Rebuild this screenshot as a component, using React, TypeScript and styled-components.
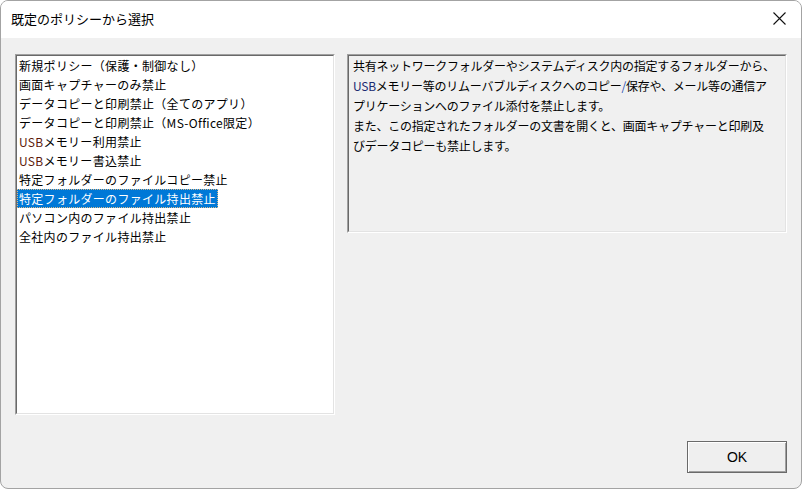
import React from "react";
import styled, { createGlobalStyle } from "styled-components";

const GlobalStyle = createGlobalStyle`
  html, body { margin: 0; padding: 0; background: #ffffff; }
  * { box-sizing: border-box; }
`;

const FONT = `"Noto Sans CJK JP", "Noto Sans", sans-serif`;

const Window = styled.div`
  width: 802px;
  height: 489px;
  border: 1px solid #a3a3a3;
  border-radius: 8px;
  overflow: hidden;
  background: #f0f0f0;
  display: flex;
  flex-direction: column;
  font-family: ${FONT};
  color: #000;
`;

const TitleBar = styled.div`
  height: 37px;
  background: #ffffff;
  display: flex;
  align-items: center;
  justify-content: space-between;
  padding: 0 15px 2px 10px;
`;

const Title = styled.div`
  font-size: 13px;
  line-height: 16px;
`;

const CloseIcon = styled.svg`
  width: 13px;
  height: 13px;
  display: block;
`;

const Body = styled.div`
  flex: 1;
  display: flex;
  flex-direction: column;
  padding: 16px 14px 15px 14px;
`;

const Panels = styled.div`
  display: flex;
  gap: 12px;
  align-items: flex-start;
`;

const Sunken = styled.div<{ $w: number; $h: number; $bg: string }>`
  width: ${(p) => p.$w}px;
  height: ${(p) => p.$h}px;
  border: 1px solid;
  border-color: #a0a0a0 #ffffff #ffffff #a0a0a0;
  background: ${(p) => p.$bg};
`;

const SunkenInner = styled.div`
  width: 100%;
  height: 100%;
  border: 1px solid;
  border-color: #696969 #e3e3e3 #e3e3e3 #696969;
  overflow: hidden;
`;

const List = styled.div`
  display: flex;
  flex-direction: column;
  align-items: flex-start;
`;

const Item = styled.div<{ $selected?: boolean }>`
  height: 19px;
  line-height: 19px;
  font-size: 12px;
  letter-spacing: 0.3px;
  padding: 0 2px;
  white-space: nowrap;
  color: ${(p) => (p.$selected ? "#ffffff" : "#000000")};
  background: ${(p) => (p.$selected ? "#0078d7" : "transparent")};
  outline: ${(p) => (p.$selected ? "1px dotted #d9b98a" : "none")};
  outline-offset: -1px;
`;

const Usb = styled.span<{ $tint: string }>`
  color: ${(p) => p.$tint};
`;

const Description = styled.div`
  padding: 0 4px;
  font-size: 12px;
  line-height: 20px;
  letter-spacing: -0.25px;
  white-space: nowrap;
`;

const Line = styled.div``;

const Footer = styled.div`
  margin-top: auto;
  display: flex;
  justify-content: flex-end;
`;

const Button = styled.button`
  width: 100px;
  height: 32px;
  border: 1px solid #6a6a6a;
  background: #efefef;
  box-shadow: inset 1px 1px 0 #ffffff, inset -1px -1px 0 #a0a0a0;
  font-family: "Liberation Sans", Arial, sans-serif;
  font-size: 14px;
  color: #000;
  padding: 0;
  cursor: default;
`;

const items: { label: React.ReactNode; selected?: boolean }[] = [
  { label: "新規ポリシー（保護・制御なし）" },
  { label: "画面キャプチャーのみ禁止" },
  { label: "データコピーと印刷禁止（全てのアプリ）" },
  { label: "データコピーと印刷禁止（MS-Office限定）" },
  { label: <><Usb $tint="#5e1a0c">USB</Usb>メモリー利用禁止</> },
  { label: <><Usb $tint="#5e1a0c">USB</Usb>メモリー書込禁止</> },
  { label: "特定フォルダーのファイルコピー禁止" },
  { label: "特定フォルダーのファイル持出禁止", selected: true },
  { label: "パソコン内のファイル持出禁止" },
  { label: "全社内のファイル持出禁止" },
];

export default function App() {
  return (
    <>
      <GlobalStyle />
      <Window>
        <TitleBar>
          <Title>既定のポリシーから選択</Title>
          <CloseIcon viewBox="0 0 13 13">
            <path d="M0.5 0.5 L12.5 12.5 M12.5 0.5 L0.5 12.5" stroke="#111" strokeWidth="1.1" fill="none" />
          </CloseIcon>
        </TitleBar>
        <Body>
          <Panels>
            <Sunken $w={320} $h={361} $bg="#ffffff">
              <SunkenInner>
                <List>
                  {items.map((it, i) => (
                    <Item key={i} $selected={it.selected}>
                      {it.label}
                    </Item>
                  ))}
                </List>
              </SunkenInner>
            </Sunken>
            <Sunken $w={440} $h={179} $bg="#f0f0f0">
              <SunkenInner>
                <Description>
                  <Line>共有ネットワークフォルダーやシステムディスク内の指定するフォルダーから、</Line>
                  <Line>
                    <Usb $tint="#1b2a70">USB</Usb>メモリー等のリムーバブルディスクへのコピー
                    <Usb $tint="#1f4fb0">/</Usb>保存や、メール等の通信ア
                  </Line>
                  <Line>プリケーションへのファイル添付を禁止します。</Line>
                  <Line>また、この指定されたフォルダーの文書を開くと、画面キャプチャーと印刷及</Line>
                  <Line>びデータコピーも禁止します。</Line>
                </Description>
              </SunkenInner>
            </Sunken>
          </Panels>
          <Footer>
            <Button>OK</Button>
          </Footer>
        </Body>
      </Window>
    </>
  );
}
